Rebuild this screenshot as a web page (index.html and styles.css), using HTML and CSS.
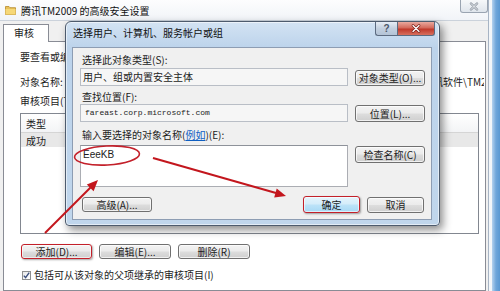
FILE: index.html
```html
<!DOCTYPE html>
<html lang="zh-CN">
<head>
  <meta charset="UTF-8">
  <title>腾讯TM2009 的高级安全设置</title>
  <link rel="stylesheet" href="styles.css">
</head>
<body>
<div class="screen">
  <div class="win">
    <div class="win-title">
      <svg class="folder" width="11" height="10" viewBox="0 0 11 10">
        <path d="M0.5 1.5h3.5l1 1.2h5.5v6.8h-10z" fill="#e8c15a" stroke="#b88a2a" stroke-width="0.8"/>
        <path d="M0.5 4h10v5.5h-10z" fill="#f6d878"/>
      </svg>
      <span class="title">腾讯TM2009 的高级安全设置</span>
      <div class="win-close">
        <svg width="12" height="9" viewBox="0 0 12 9">
          <path d="M3 1.5l6 6M9 1.5l-6 6" stroke="#8a939e" stroke-width="2.4" stroke-linecap="round"/>
          <path d="M3 1.5l6 6M9 1.5l-6 6" stroke="#f4f6f8" stroke-width="1" stroke-linecap="round"/>
        </svg>
      </div>
    </div>
    <div class="win-body">
      <div class="tab">审核</div>
      <div class="tab-page">
        <p class="line intro">要查看或编辑审核项目的详细信息，请选择该项目并单击“编辑”。</p>
        <div class="obj-row">
          <span class="line">对象名称:</span>
          <span class="line obj-path">腾讯软件\TM2009\Bin\QQ.exe</span>
        </div>
        <p class="line list-label">审核项目(T):</p>
        <div class="list">
          <div class="list-head">
            <span class="col col-type">类型</span>
            <span class="col col-name">名称</span>
            <span class="col col-access">访问</span>
            <span class="col col-from">继承于</span>
          </div>
          <div class="list-item">
            <span class="col col-type">成功</span>
            <span class="col col-name">Everyone</span>
            <span class="col col-access">完全控制</span>
            <span class="col col-from">&lt;不是继承的&gt;</span>
          </div>
        </div>
        <div class="btn-row">
          <button class="btn btn-add marked">添加(D)...</button>
          <button class="btn btn-edit">编辑(E)...</button>
          <button class="btn btn-edit">删除(R)</button>
        </div>
        <label class="check">
          <span class="check-box">
            <svg width="7" height="7" viewBox="0 0 7 7"><path d="M0.8 3.6l1.8 2 3.6-5" fill="none" stroke="#3b4f7d" stroke-width="1.4"/></svg>
          </span>
          <span class="line">包括可从该对象的父项继承的审核项目(I)</span>
        </label>
      </div>
    </div>
  </div>
  <div class="frame-edge"></div>

  <div class="dlg">
    <div class="dlg-bar">
      <span class="dlg-title">选择用户、计算机、服务帐户或组</span>
      <div class="cap cap-help">?</div>
      <div class="cap cap-close">
        <svg width="12" height="9" viewBox="0 0 12 9">
          <path d="M3 1.5l6 6M9 1.5l-6 6" stroke="#7a2119" stroke-width="2.6" stroke-linecap="round"/>
          <path d="M3 1.5l6 6M9 1.5l-6 6" stroke="#fff" stroke-width="1.3" stroke-linecap="round"/>
        </svg>
      </div>
    </div>
    <div class="dlg-client">
      <p class="line lbl lbl-first">选择此对象类型(S):</p>
      <div class="field-row">
        <div class="field">用户、组或内置安全主体</div>
        <button class="btn side-btn">对象类型(O)...</button>
      </div>
      <p class="line lbl lbl-loc">查找位置(F):</p>
      <div class="field-row row-loc">
        <div class="field mono">fareast.corp.microsoft.com</div>
        <button class="btn side-btn btn-tall">位置(L)...</button>
      </div>
      <p class="line lbl lbl-names">输入要选择的对象名称(<a class="link" href="#">例如</a>)(E):</p>
      <div class="field-row row-names">
        <div class="names">EeeKB</div>
        <button class="btn side-btn btn-tall">检查名称(C)</button>
      </div>
      <div class="dlg-foot">
        <button class="btn btn-adv">高级(A)...</button>
        <button class="btn btn-ok marked">确定</button>
        <button class="btn btn-cancel">取消</button>
      </div>
    </div>
  </div>

  <svg class="marks" width="500" height="291" viewBox="0 0 500 291">
    <ellipse cx="107" cy="155.5" rx="32.5" ry="9.5" fill="none" stroke="#c3202a" stroke-width="1.6" transform="rotate(-3 107 155.5)"/>
    <line x1="45" y1="233" x2="90.5" y2="187.5" stroke="#c3161d" stroke-width="2"/>
    <polygon points="98,180 93.6,191.2 86.8,184.4" fill="#c3161d"/>
    <line x1="153" y1="158" x2="276" y2="193" stroke="#c3161d" stroke-width="2"/>
    <polygon points="286,196 274.2,197.5 276.7,188.6" fill="#c3161d"/>
  </svg>
</div>
</body>
</html>
```

FILE: styles.css
```css
* { box-sizing: border-box; }
body {
  margin: 0;
  width: 500px;
  height: 291px;
  overflow: hidden;
  font-family: "Noto Sans CJK SC", "Liberation Sans", sans-serif;
  font-size: 10px;
  color: #1c1c1c;
  background: #f0f0f0;
}
p { margin: 0; }
.line { line-height: 12px; white-space: nowrap; }
.screen {
  position: relative;
  display: flex;
  width: 500px;
  height: 291px;
  overflow: hidden;
}

/* outer window */
.win {
  width: 488px;
  display: flex;
  flex-direction: column;
  background: #f0f0f0;
}
.win-title {
  height: 20px;
  display: flex;
  align-items: flex-start;
  background: linear-gradient(#fdfdfe, #f1f4f8);
}
.folder { margin: 5px 0 0 5px; }
.win-title .title {
  margin: 5px 0 0 5px;
  line-height: 12px;
  color: #111;
}
.win-close {
  margin-left: auto;
  width: 28px;
  height: 13px;
  border: 1px solid #9aa4b1;
  border-top: none;
  border-radius: 0 0 3px 3px;
  background: linear-gradient(#f6f8fa, #dfe5ec);
  display: flex;
  align-items: center;
  justify-content: center;
}
.win-body {
  flex: 1;
  border-top: 1px solid #cbd2db;
  padding: 3px 2px 0 3px;
  display: flex;
  flex-direction: column;
}
.tab {
  position: relative;
  z-index: 1;
  width: 46px;
  height: 18px;
  margin-bottom: -1px;
  border: 1px solid #898c95;
  border-bottom: none;
  background: #fff;
  padding-left: 10px;
  line-height: 16px;
}
.tab-page {
  flex: 1;
  border: 1px solid #898c95;
  background: #fff;
  padding: 9px 0 0 16px;
}
.obj-row {
  margin-top: 13px;
  display: grid;
  grid-template-columns: 403px 1fr;
  width: 464px;
  overflow: hidden;
}
.obj-path { overflow: hidden; }
.list-label { margin-top: 7px; }
.list {
  margin-top: 6px;
  width: 459px;
  height: 121px;
  border: 1px solid #828790;
  background: #fff;
}
.list-head {
  height: 19px;
  display: flex;
  align-items: center;
  border-bottom: 1px solid #d5d5d5;
  background: linear-gradient(#fff, #f3f4f6);
}
.list-item {
  height: 14px;
  display: flex;
  align-items: center;
  background: #e8e8e8;
}
.col { padding-left: 5px; white-space: nowrap; overflow: hidden; }
.col-type { width: 60px; }
.col-name { width: 140px; }
.col-access { width: 80px; }
.col-from { width: 90px; }

.btn {
  font-family: inherit;
  font-size: 10px;
  color: #1c1c1c;
  padding: 0;
  margin: 0;
  border: 1px solid #707070;
  border-radius: 3px;
  background: linear-gradient(#f3f3f3 0, #ebebeb 48%, #dddddd 52%, #cfcfcf 100%);
  box-shadow: inset 0 0 0 1px rgba(255,255,255,0.7);
  line-height: 12px;
  white-space: nowrap;
}
.btn.marked {
  border: 1.5px solid #c3202a;
  box-shadow: inset 0 0 0 1px rgba(255,255,255,0.6), 1px 1px 2px rgba(0,0,0,0.35);
}
.btn-row {
  margin-top: 10px;
  margin-left: 1px;
  display: flex;
  gap: 7px;
}
.btn-row .btn { height: 15px; }
.btn-add { width: 71px; }
.btn-edit { width: 72px; }
.check {
  margin-top: 10px;
  margin-left: 2px;
  display: flex;
  align-items: center;
  gap: 3px;
}
.check-box {
  width: 9px;
  height: 9px;
  border: 1px solid #8e8f8f;
  background: linear-gradient(135deg, #e9e9e9, #fff);
  display: flex;
  align-items: center;
  justify-content: center;
}

.frame-edge {
  width: 12px;
  border-left: 1px solid #a7b4c4;
  background: linear-gradient(90deg, #f3f6f9 0, #f3f6f9 3px, #b5d2ee 3px, #6fa6da 7px, #5a98d2);
}

/* dialog */
.dlg {
  position: absolute;
  left: 65px;
  top: 21px;
  width: 375px;
  height: 205px;
  border: 1px solid #4d5b6d;
  border-radius: 6px 6px 4px 4px;
  background: linear-gradient(#d3e3f3, #bcd3eb 26px, #c0d6ec);
  box-shadow: inset 0 0 0 1px rgba(255,255,255,0.55), 3px 4px 8px rgba(0,0,0,0.45);
  display: flex;
  flex-direction: column;
  z-index: 2;
}
.dlg-bar {
  height: 25px;
  display: flex;
  align-items: flex-start;
  padding-right: 4px;
}
.dlg-title {
  margin: 5px 0 0 7px;
  line-height: 12px;
  color: #111;
}
.cap {
  height: 14px;
  border: 1px solid #5c6b80;
  border-top: none;
  display: flex;
  align-items: center;
  justify-content: center;
}
.cap-help {
  margin-left: auto;
  width: 22px;
  border-right: none;
  border-radius: 0 0 0 3px;
  background: linear-gradient(#e6edf5, #c3d0df 50%, #b3c3d6);
  font-family: "Liberation Sans", sans-serif;
  font-weight: bold;
  font-size: 10px;
  color: #4a5668;
}
.cap-close {
  width: 38px;
  border-radius: 0 0 3px 0;
  background: linear-gradient(#e9a99e, #d3695b 45%, #c0392b 55%, #d7705f);
}
.dlg-client {
  flex: 1;
  margin: 0 7px 5px 6px;
  border: 1px solid #8d9db3;
  background: #f0f0f0;
  padding: 6px 6px 0 7px;
  display: flex;
  flex-direction: column;
}
.lbl { margin-left: 2px; }
.lbl-loc { margin-top: 5px; }
.lbl-names { margin-top: 7px; }
.link { color: #0f5fc2; text-decoration: underline; }
.field-row {
  margin-top: 2px;
  display: flex;
  align-items: flex-start;
  gap: 7px;
}
.row-loc { margin-top: 1px; }
.row-names { margin-top: 4px; }
.field {
  width: 268px;
  height: 18px;
  border: 1px solid #b9bec6;
  background: #f6f6f6;
  padding-left: 2px;
  line-height: 16px;
  white-space: nowrap;
}
.field.mono {
  font-family: "Liberation Mono", monospace;
  font-size: 8px;
  padding-left: 4px;
}
.names {
  width: 268px;
  height: 42px;
  border: 1px solid #abadb3;
  border-top-color: #8e929a;
  background: #fff;
  padding: 3px 0 0 2px;
  font-family: "Liberation Sans", sans-serif;
  font-size: 10px;
  line-height: 12px;
}
.side-btn {
  width: 70px;
  height: 16px;
  margin-top: 2px;
}
.side-btn.btn-tall { height: 17px; margin-top: 1px; }
.dlg-foot {
  margin-top: 10px;
  display: flex;
  align-items: flex-start;
  gap: 7px;
}
.btn-adv { width: 70px; height: 15px; margin-left: 2px; }
.btn-ok {
  width: 57px;
  height: 17px;
  margin-top: -1px;
  margin-left: auto;
  background: linear-gradient(#e5f4fc 0, #d4ecfa 48%, #bde3f8 52%, #a7d8f5 100%);
}
.btn-cancel { width: 57px; height: 16px; margin-right: 1px; }

.marks {
  position: absolute;
  left: 0;
  top: 0;
  z-index: 3;
  pointer-events: none;
}
```
